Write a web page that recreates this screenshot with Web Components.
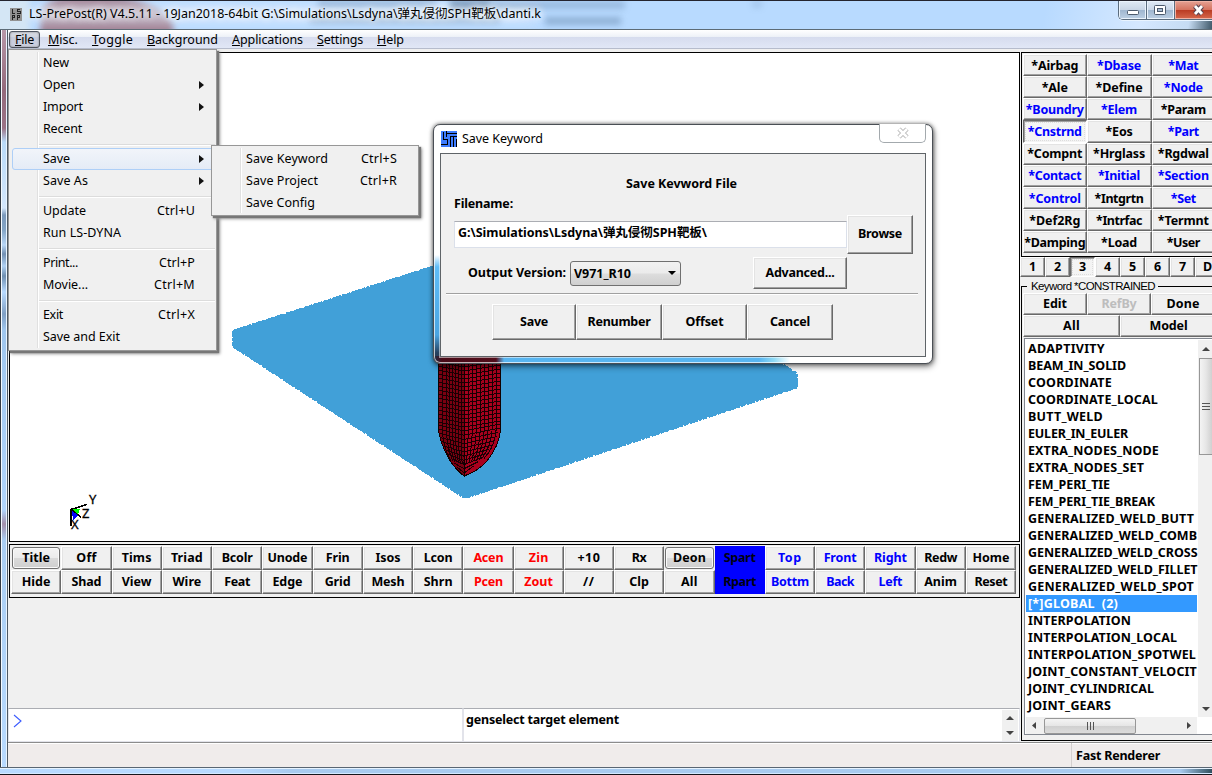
<!DOCTYPE html>
<html lang="en">
<head>
<meta charset="utf-8">
<title>LS-PrePost</title>
<style>
html,body{margin:0;width:1212px;height:775px;overflow:hidden}
body{font:12.5px/16px "Noto Sans","Noto Sans CJK SC",sans-serif;color:#000;background:#b8daff}
</style>
</head>
<body>
<app-window></app-window>
<script>
const define=(name,html,setup)=>customElements.define(name,class extends HTMLElement{
  connectedCallback(){
    if(this.shadowRoot)return;
    const t=document.createElement('template');
    t.innerHTML=html;
    this.attachShadow({mode:'open'}).appendChild(t.content.cloneNode(true));
    if(setup)setup(this,this.shadowRoot);
  }
});
const NS='http://www.w3.org/2000/svg';

/* Label whose tracking is adjusted so that it spans the width given in w */
define('fit-label',`<style>:host{display:inline-block;white-space:pre}span{display:inline-block;white-space:pre}</style><span><slot></slot></span>`,(el,root)=>{
  const w=+el.getAttribute('w');
  if(!w)return;
  const s=root.querySelector('span'),n=el.textContent.length;
  s.style.letterSpacing=((w-s.getBoundingClientRect().width)/n)+'px';
});

define('bevel-button',`<style>
:host{display:flex;align-items:center;justify-content:center;box-sizing:border-box;min-width:0;overflow:hidden;white-space:nowrap;font-weight:bold;background:#f0f0f0;
border:1px solid;border-color:#fff #696969 #696969 #fff;box-shadow:inset -1px -1px #a0a0a0,inset 1px 1px #e3e3e3}
:host([blue]){color:#00f}:host([red]){color:#f00}:host([off]){color:#bdbdbd}
:host([down]){border-color:#696969 #fff #fff #696969;box-shadow:inset 1px 1px #a0a0a0;background:#f4f4f4;outline:1px dotted #ddd;outline-offset:-3px}
:host([round]){border:1px solid #707070;border-radius:3px;margin:1px 1px 1px 1px;background:linear-gradient(#f4f4f4,#ececec 48%,#dadada 52%,#cfcfcf);box-shadow:inset 0 0 0 1px #fafafa}
:host([solid]){border:0;box-shadow:none;background:#00f;color:#001}
</style><slot></slot>`);

const buttons=(root,rows)=>{
  const g=root.querySelector('.grid');
  rows.forEach(([text,flags,w])=>{
    const b=document.createElement('bevel-button');
    (flags||'').split(' ').filter(Boolean).forEach(f=>b.setAttribute(f,''));
    const l=document.createElement('fit-label');
    if(w)l.setAttribute('w',w);
    l.textContent=text;b.appendChild(l);g.appendChild(b);
  });
};

define('title-bar',`<style>
:host{display:flex;height:27px;padding:1px 0 0 10px;position:relative;overflow:hidden;
background:linear-gradient(100deg,transparent 86%,#d5e8ff 94%,#c6dcf3 98%,#40596a 100%),#b8daff;border-top:1px solid #24242e;border-bottom:1px solid #5c6b76}
.back{position:absolute;inset:0;overflow:hidden}
.back i{position:absolute;filter:blur(3px);background:#5e7fa3}
.icon{width:12px;height:13px;margin:6px 7px 0 0;position:relative}
.t{padding-top:4px;height:17px;position:relative;text-shadow:0 0 8px #fff,0 0 8px #fff,0 0 6px #fff9}
.ctl{position:absolute;right:0;top:0;display:flex;height:18px;width:93px;border:1px solid #5b6c7e;border-top:0;border-right:0;border-radius:0 0 0 5px;overflow:hidden;box-shadow:0 1px #e9f4ff}
.ctl b{width:27px;border-right:1px solid #5b6c7e;background:linear-gradient(#e0eaf5,#c9d6e6 48%,#9fb6cf 50%,#bdd0e4);box-shadow:inset 0 0 0 1px #eaf3fc}
.ctl b:last-child{width:46px;background:linear-gradient(#e5a294,#d5735f 48%,#b93a22 50%,#d6694d);box-shadow:inset 0 0 0 1px #efb3a5;border:0}
svg{display:block}
</style>
<div class="back">
<i style="left:-10px;top:-4px;width:40px;height:40px;background:#d4e6f5"></i>
<i style="left:42px;top:-6px;width:132px;height:52px;border-radius:60% 60% 0 0;background:#a07f92;transform:rotate(8deg)"></i>
<i style="left:36px;top:4px;width:500px;height:18px;background:#e3effa99;filter:blur(6px)"></i>
<i style="left:318px;top:-1px;width:118px;height:7px;opacity:.4"></i>
<i style="left:450px;top:-1px;width:40px;height:10px;opacity:.7"></i>
<i style="left:490px;top:0;width:135px;height:8px;opacity:.35"></i>
<i style="left:752px;top:-1px;width:10px;height:8px;opacity:.2"></i>
<i style="left:310px;top:15px;width:190px;height:8px;opacity:.3"></i>
<i style="left:545px;top:16px;width:76px;height:8px;opacity:.45"></i>
</div>
<svg class="icon" viewBox="0 0 12 13" shape-rendering="crispEdges"><rect width="12" height="13" fill="#929292"/><path d="M2 1v4h3M10 1.500h-3v1.500h3v2h-3.500M2.500 12V7.500h2v2h-2M7.500 12V7.500h2v2h-2" fill="none" stroke="#222"/></svg>
<div class="t"><fit-label w="512">LS-PrePost(R) V4.5.11 - 19Jan2018-64bit G:\\Simulations\\Lsdyna\\弹丸侵彻SPH靶板\\danti.k</fit-label></div>
<div class="ctl"><b><svg width="27" height="18"><rect x="8.500" y="9.500" width="11" height="4" rx="1" fill="#fff" stroke="#4c5a6c"/></svg></b>
<b><svg width="27" height="18"><rect x="7.500" y="4.500" width="11" height="9" rx="1" fill="#fff" stroke="#4c5a6c"/><rect x="10.500" y="7.500" width="5" height="3" fill="#a9bdd3" stroke="#4c5a6c"/></svg></b>
<b><svg width="46" height="18"><path d="M20 5l7 8M27 5l-7 8" stroke="#5a4450" stroke-width="5"/><path d="M20 5l7 8M27 5l-7 8" stroke="#fff" stroke-width="2.800"/></svg></b></div>`);

define('menu-bar',`<style>
:host{display:flex;height:18px;padding-left:7px;gap:14px;background:linear-gradient(#fff,#eef2f8 36%,#d6dcee 40%,#e1e7f6);border-bottom:1px solid #b6bccc}
fit-label{height:18px;line-height:20px}
.f{position:relative}
.f::before{content:"";position:absolute;left:-6px;top:1px;width:29px;height:15px;border:1px solid #4e545f;border-radius:3px;background:#b8bccb88;box-shadow:inset 0 0 2px #777}
.f fit-label{position:relative}
</style>
<div class="f"><fit-label w="19"><u>F</u>ile</fit-label></div><fit-label w="30"><u>M</u>isc.</fit-label><fit-label w="41"><u>T</u>oggle</fit-label><fit-label w="71"><u>B</u>ackground</fit-label><fit-label w="71"><u>A</u>pplications</fit-label><fit-label w="46"><u>S</u>ettings</fit-label><fit-label w="27"><u>H</u>elp</fit-label>`);

define('menu-item',`<style>
:host{display:flex;align-items:center;height:22px;padding:0 20px 0 34px;box-sizing:border-box;justify-content:space-between;position:relative}
:host([sub]){padding-right:11px}
:host([hot]){background:linear-gradient(#f2f5fa,#e4ebf6);outline:1px solid #aecff7;outline-offset:-1px;border-radius:3px;margin-left:3px;padding-left:31px}
:host([sub])::after{content:"";border:4px solid transparent;border-left:5px solid #111;border-right:0}
:host([sub]) .k{display:none}
</style><slot></slot><span class="k"><slot name="key"></slot></span>`);
define('menu-separator',`<style>:host{display:block;height:8px;padding:4px 0 0 30px;box-sizing:border-box}div{height:1px;background:#dcdcdc;border-bottom:1px solid #fff}</style><div></div>`);
define('popup-menu',`<style>
:host{display:block;box-sizing:border-box;border:1px solid #979797;background:linear-gradient(90deg,transparent 28px,#e0e0e0 28px,#e0e0e0 29px,#fff 29px,#fff 30px,transparent 30px) 0 2px/100% calc(100% - 4px) no-repeat,#f0f0f0;padding:1px 1px 2px 0;box-shadow:2px 2px 1px #777,3px 3px 3px #999}
</style><slot></slot>`);

define('model-view',`<style>
:host{display:block;height:488px;border:1px solid #000;background:#fff;overflow:hidden}
svg{display:block}
text{font:13px "Noto Sans",sans-serif;stroke:#000;stroke-width:.3px}
</style><svg width="1009" height="488" viewBox="10 53 1009 488" shape-rendering="crispEdges">
<path d="M232 330L565 223 798 373V388L470 497.500H462L232 347z" fill="#41a0d8"/>
<path d="M232 330L565 223M798 388L470 497.500M462 497.500L232 347V330M798 373v15M780 362l17 11" stroke="#fff" stroke-width="1.500" stroke-dasharray="1 3 1 9 2 4" fill="none"/>
<g id="bullet"></g>
<path d="M71 509.500l16-5M71 509v17M71 509l10 8" stroke="#000" stroke-width="1.600" fill="none"/>
<path d="M72 509l8 0-2 6z" fill="#0f0"/><path d="M72 511l6 4-5 5z" fill="#00f"/>
<text x="89" y="504">Y</text><text x="82" y="518">Z</text><text x="71" y="529">X</text>
</svg>`,(el,root)=>{
  const g=root.getElementById('bullet');
  const add=(d,a)=>{const p=document.createElementNS(NS,'path');p.setAttribute('d',d);for(const k in a)p.setAttribute(k,a[k]);g.appendChild(p);};
  const left='M438 340H464V476Q456 470 449 459Q439 442 438 424z',right='M464 340H500.500V430Q499 446 487 461Q477 472 464 476z';
  add(left,{fill:'#7a0011'});add(right,{fill:'#a8001d'});
  let d='';
  /* meridians, bending towards the tip */
  [4,8,11,14,17,20,23,26,30,34,38,42,46,50,54,58].forEach(x=>{
    const X=438+x,k=(X-464)/36;
    d+=`M${X+.5} 340V${425}Q${X} 446 ${464+(X-464)*.62} ${464-Math.abs(k)*6}`;
  });
  /* rings */
  for(let y=344;y<428;y+=4)d+=`M438 ${y-2}L464 ${y+3}L500 ${y-3}`;
  for(let i=0;i<11;i++){
    const y=428+i*4.2,h=1-Math.pow(i/12,1.700);
    d+=`M${464-26*h} ${y-3}L464 ${y+3}L${464+36*h} ${y-4}`;
  }
  add(d,{fill:'none',stroke:'#180003','stroke-width':1});
  add(left+right,{fill:'none',stroke:'#100','stroke-width':1});
});

define('view-toolbar',`<style>
:host{display:block;height:48px;border:1px solid #000;padding:1px 3px 3px 1px;background:#f0f0f0}
.grid{display:grid;grid-template:24px 24px/repeat(20,1fr)}
</style><div class="grid"></div>`,(el,root)=>buttons(root,[
['Title','round',28],['Off','',20],['Tims','',30],['Triad','',32],['Bcolr','',31],['Unode','',40],['Frin','',24],['Isos','',25],['Lcon','',29],['Acen','red',30],['Zin','red',20],['+10','',23],['Rx','',15],['Deon','round',33],['Spart','solid',32],['Top','blue',24],['Front','blue',33],['Right','blue',33],['Redw','',33],['Home','',37],
['Hide','',29],['Shad','',30],['View','',30],['Wire','',29],['Feat','',26],['Edge','',30],['Grid','',26],['Mesh','',33],['Shrn','',29],['Pcen','red',29],['Zout','red',29],['//','',12],['Clp','',20],['All','',17],['Rpart','solid',33],['Bottm','blue',38],['Back','blue',28],['Left','blue',24],['Anim','',33],['Reset','',33]]));

define('keyword-grid',`<style>
:host{display:block;height:202px;border:1px solid #000;border-right:0;padding:1px 0 0 1px;width:200px}
.grid{display:grid;width:193px;grid-template:repeat(9,22.15px)/repeat(3,64.300px)}
fit-label{position:relative;top:.6px;left:-.4px}
</style><div class="grid"></div>`,(el,root)=>buttons(root,[
['*Airbag','',47],['*Dbase','blue',44],['*Mat','blue',30],['*Ale','',26],['*Define','',47],['*Node','blue',39],['*Boundry','blue',58],['*Elem','blue',36],['*Param','',45],['*Cnstrnd','blue down',54],['*Eos','',27],['*Part','blue',31],['*Compnt','',55],['*Hrglass','',52],['*Rgdwal','',51],['*Contact','blue',53],['*Initial','blue',42],['*Section','blue',51],['*Control','blue',52],['*Intgrtn','',49],['*Set','blue',25],['*Def2Rg','',51],['*Intrfac','',46],['*Termnt','',51],['*Damping','',61],['*Load','',36],['*User','',33]]));

define('page-tabs',`<style>:host{display:block;height:20px;width:200px;overflow:hidden;margin-left:-1px}.grid{display:grid;grid-template:20px/repeat(8,25px)}</style><div class="grid"></div>`,
(el,root)=>buttons(root,[['1'],['2'],['3','down'],['4'],['5'],['6'],['7'],['D']]));

define('keyword-list',`<style>
:host{display:flex;height:397px;border:1px solid #828790;border-right:0;background:#fff;margin:1px 0 0 1px;padding:1px 0 0 1px;box-sizing:border-box}
.l{width:172px;display:flex;flex-direction:column}
ol{list-style:none;margin:0;padding:0;height:377px;overflow:hidden;font-weight:bold}
li{height:17px;line-height:17px;padding-left:2px;white-space:pre}
li.sel{background:#3399ff;color:#fff;width:169px}
.h{display:flex;align-items:center;height:17px;background:#f0f0f0;width:171px}
.th{width:90px;height:14px;border:1px solid #979797;border-radius:2px;background:linear-gradient(#f4f4f4,#e6e6e6 48%,#d0d0d0 52%,#dcdcdc);display:flex;justify-content:center;align-items:center}
.v{width:14px;background:#f0f0f0;height:377px;display:flex;flex-direction:column;align-items:flex-end;justify-content:space-between}
.tv{width:12px;height:95px;margin-bottom:auto;border:1px solid #979797;border-right:0;background:linear-gradient(90deg,#f4f4f4,#e6e6e6 50%,#d0d0d0);display:flex;align-items:center;justify-content:center}
svg{display:block}
</style><div class="l"><ol></ol>
<div class="h"><svg width="18" height="17"><path d="M10 5v7l-4-3.500z" fill="#444"/></svg><div class="th"><svg width="9" height="8"><path d="M1.500 0v8M4.500 0v8M7.500 0v8" stroke="#555"/></svg></div><svg width="60" height="17"><path d="M51 5v7l4-3.500z" fill="#444"/></svg></div></div>
<div class="v"><svg width="14" height="18"><path d="M4 11h8l-4-4z" fill="#444"/></svg><div class="tv"><svg width="9" height="9"><path d="M0 1.500h8M0 4.500h8M0 7.500h8" stroke="#555"/></svg></div><svg width="14" height="15"><path d="M4 5h8l-4 4z" fill="#444"/></svg></div>`,(el,root)=>{
  const ol=root.querySelector('ol');
  [['ADAPTIVITY',77],['BEAM_IN_SOLID',98],['COORDINATE',84],['COORDINATE_LOCAL',130],['BUTT_WELD',75],['EULER_IN_EULER',100],['EXTRA_NODES_NODE',131],['EXTRA_NODES_SET',116],['FEM_PERI_TIE',82],['FEM_PERI_TIE_BREAK',127],['GENERALIZED_WELD_BUTT',166],['GENERALIZED_WELD_COMB',169],['GENERALIZED_WELD_CROSS',169.5],['GENERALIZED_WELD_FILLET',169.5],['GENERALIZED_WELD_SPOT',166],['[*]GLOBAL  (2)',90],['INTERPOLATION',103],['INTERPOLATION_LOCAL',149],['INTERPOLATION_SPOTWEL',168],['JOINT_CONSTANT_VELOCIT',169],['JOINT_CYLINDRICAL',126],['JOINT_GEARS',83]].forEach(([t,w],i)=>{
    const li=document.createElement('li'),l=document.createElement('fit-label');
    if(i===15)li.className='sel';
    l.setAttribute('w',w);l.textContent=t;li.appendChild(l);ol.appendChild(li);
  });
});

define('keyword-group',`<style>
:host{display:block;position:relative;margin-top:9px;height:453px;box-sizing:border-box;height:455px;border:1px solid #000;border-right:0;padding:6px 0 0 1px;width:200px}
.legend{position:absolute;left:5px;top:-9px;background:#f0f0f0;padding:0 3px 0 4px;font:11.500px/16px "Liberation Sans",sans-serif;height:15px}
.r{display:flex;height:22px}
.a{width:64px}.b{width:97px;flex:none}.r bevel-button{flex:none}
</style><div class="legend"><fit-label w="124">Keyword *CONSTRAINED</fit-label></div>
<div class="r"><bevel-button class="a"><fit-label w="24">Edit</fit-label></bevel-button><bevel-button class="a" off><fit-label w="35">RefBy</fit-label></bevel-button><bevel-button class="a"><fit-label w="33">Done</fit-label></bevel-button></div>
<div class="r"><bevel-button class="b"><fit-label w="17">All</fit-label></bevel-button><bevel-button class="b"><fit-label w="38">Model</fit-label></bevel-button></div>
<keyword-list></keyword-list>`);

define('command-line',`<style>
:host{display:flex;height:34px}
div{box-sizing:border-box;background:#fff;border:1px solid #e2e3ea;border-top:1px solid #abadb3;height:34px}
.a{width:455px;padding:5px 0 0 4px}
.b{flex:1;display:flex;justify-content:space-between;font-weight:bold;padding:3px 0 0 2px}
.s{display:block;background:#f0f0f0;margin:-2px 1px 1px 0}
</style><div class="a"><svg width="10" height="14"><path d="M1 1l7 6-7 6" fill="none" stroke="#3b5bff" stroke-width="1.100"/></svg></div>
<div class="b"><fit-label w="153">genselect target element</fit-label><svg class="s" width="16" height="31"><path d="M4 10h8l-4-4zM4 21h8l-4 4z" fill="#444"/></svg></div>`);

define('status-bar',`<style>
:host{display:flex;height:24px;background:#f0eceb;border-top:1px solid #8c8c8c;box-shadow:inset 0 1px #fff;justify-content:flex-end}
div{width:136px;border-left:1px solid #d4d0cf;padding-left:4px;line-height:25px;font-weight:bold}
</style><div><fit-label w="84">Fast Renderer</fit-label></div>`);

define('save-dialog',`<style>
:host{display:flex;flex-direction:column;box-sizing:border-box;width:500px;height:240px;border:1px solid #4a4f55;border-radius:7px;padding:0 6px 6px;
background:linear-gradient(90deg,#20304a 0,#4a0b18 8px,#520d1b 62px,transparent 70px) 0 100%/100% 7px no-repeat,
linear-gradient(90deg,#58b5f0 325px,#8fdaf5 340px,#fff 356px) 0 100%/100% 7px no-repeat,
linear-gradient(#fff0 130px,#5fbdf8 142px,#4aa5e2 210px,#26405e 228px) 0 0/7px 100% no-repeat,#fff;
box-shadow:inset 0 0 0 1px #ffffffb0,0 0 4px #0009,1px 3px 6px #0006}
header{display:flex;height:28px;align-items:center;position:relative;padding-left:1px;flex:none}
header svg.i{margin-right:5px}
.x{position:absolute;right:0;top:-1px;width:45px;height:18px;border:1px solid #a3a9ad;border-top:0;border-radius:0 0 5px 5px;background:#fff}
main{flex:1;display:flex;flex-direction:column;border:1px solid #5f6468;background:#f0f0f0;font-weight:bold;box-shadow:0 0 0 1px #fff8}
.hd{align-self:center;height:16px;margin:22px 0 0 -3px}
.hd fit-label{display:block}
.fn{margin:4px 0 0 13px;height:16px}
.row{display:flex}
.in{width:388px;height:25px;border:1px solid #dbe0ea;border-top-color:#abadb3;background:#fff;padding-left:3px;line-height:22px;margin:6px 0 0 13px}
.sel{width:105px;height:23px;border:1px solid #707070;border-radius:3px;background:linear-gradient(#f2f2f2,#ebebeb 48%,#ddd 52%,#cfcfcf);margin:0 72px 0 4px;display:flex;align-items:center;justify-content:space-between;padding:0 0 0 4px}
.sel fit-label{position:relative;top:1px;left:-1px}
hr{border:0;height:1px;background:#a0a0a0;margin:4px 7px 0 5px;box-shadow:0 1px #fff}
</style>
<header><svg class="i" width="16" height="16" shape-rendering="crispEdges"><rect width="16" height="16" fill="#3f7dff"/><path d="M2.500 1v7.500h4v4.500H0M5.500 0v5.500M6 2.500h10M9.500 16V5.500h6.500M12.500 6v10M15.500 8v8" fill="none" stroke="#000" stroke-width="1"/></svg><fit-label w="81">Save Keyword</fit-label>
<div class="x"><svg width="45" height="18"><path d="M19 5l8 8M27 5l-8 8" stroke="#b4b4b4" stroke-width="4.500"/><path d="M19 5l8 8M27 5l-8 8" stroke="#fff" stroke-width="2.600"/></svg></div></header>
<main>
<div class="hd"><fit-label w="111">Save Kevword File</fit-label></div>
<div class="fn"><fit-label w="59">Filename:</fit-label></div>
<div class="row" style="height:39px;margin-top:3px"><div class="in"><fit-label w="249">G:\\Simulations\\Lsdyna\\弹丸侵彻SPH靶板\\</fit-label></div><bevel-button style="width:66px;height:39px"><fit-label w="44" style="margin-top:-2px">Browse</fit-label></bevel-button></div>
<div class="row" style="margin:3px 0 0 27px;height:32px;align-items:center"><fit-label w="98">Output Version:</fit-label><div class="sel"><fit-label w="57">V971_R10</fit-label><svg width="16" height="10"><path d="M4 3h8l-4 4z"/></svg></div><bevel-button style="width:94px;height:32px"><fit-label w="69">Advanced...</fit-label></bevel-button></div>
<hr>
<div class="row" style="margin:10px 0 0 51px;height:36px">
<bevel-button style="width:84px"><fit-label w="28">Save</fit-label></bevel-button><bevel-button style="width:86px"><fit-label w="63">Renumber</fit-label></bevel-button><bevel-button style="width:85px"><fit-label w="38">Offset</fit-label></bevel-button><bevel-button style="width:86px"><fit-label w="40">Cancel</fit-label></bevel-button></div>
</main>`);

define('app-window',`<style>
:host{display:block;width:1212px;height:775px;position:relative;overflow:hidden}
.frame{display:flex;height:737px;padding-left:7px;background:linear-gradient(90deg,#333a44 1px,#f4faff 1px,#f4faff 2px,transparent 2px,transparent 6px,#eaf5ff 6px),
linear-gradient(#b797a8,#946a7c 60px,#9b7386 98px,#b9daf8 112px,#d3e6fb 178px,#7b99bb 185px,#84a5c6 200px,#b8d6f6 215px,#7290b3 224px,#b0d1f3 236px,#6f8fb1 246px,#b8daff 262px,#7f9fc4 284px,#9fc6ee 300px,#b0d4fb 480px,#a390ab 494px,#a9cdf2 510px,#b8daff)}
.client{flex:1;display:flex;flex-direction:column;background:#f0f0f0;border-left:1px solid #4d5863;min-width:0}
.main{display:flex;height:693px;padding-top:3px;box-sizing:border-box}
.left{width:1012px;display:flex;flex-direction:column;flex:none}
.left model-view,.left view-toolbar{margin-left:1px}
.left view-toolbar{margin-top:2px}
.left command-line{margin-top:auto}
.right{display:flex;flex-direction:column;margin-left:1px}
.bottom{height:8px;box-sizing:border-box;border-top:1px solid #5a6672;border-bottom:1px solid #16161c;background:radial-gradient(ellipse at 258px 50%,#7b95b3 0,transparent 16px),linear-gradient(90deg,#b8daff 240px,#a9cbef 290px,#a9cbef 1180px,#31505e 1212px);box-shadow:inset 0 1px #e6f3ff,inset 0 -1px #d5e9ff}
.m1{position:absolute;left:8px;top:49px;width:209px;height:302px}
.m2{position:absolute;left:211px;top:145px;width:208px;height:71px}
save-dialog{position:absolute;left:433px;top:124px}
</style>
<title-bar></title-bar>
<div class="frame"><div class="client"><menu-bar></menu-bar>
<div class="main"><div class="left"><model-view></model-view><view-toolbar></view-toolbar><command-line></command-line></div>
<div class="right"><keyword-grid></keyword-grid><page-tabs></page-tabs><keyword-group></keyword-group></div></div>
<status-bar></status-bar></div></div>
<div class="bottom"></div>
<save-dialog></save-dialog>
<popup-menu class="m1" style="padding-top:2px">
<menu-item><fit-label w="26">New</fit-label></menu-item>
<menu-item sub><fit-label w="32">Open</fit-label></menu-item>
<menu-item sub><fit-label w="40">Import</fit-label></menu-item>
<menu-item><fit-label w="39">Recent</fit-label></menu-item><menu-separator></menu-separator>
<menu-item sub hot><fit-label w="27">Save</fit-label></menu-item>
<menu-item sub><fit-label w="45">Save As</fit-label></menu-item><menu-separator></menu-separator>
<menu-item><fit-label w="43">Update</fit-label><fit-label slot="key" w="38">Ctrl+U</fit-label></menu-item>
<menu-item><fit-label w="78">Run LS-DYNA</fit-label></menu-item><menu-separator></menu-separator>
<menu-item><fit-label w="35">Print...</fit-label><fit-label slot="key" w="36">Ctrl+P</fit-label></menu-item>
<menu-item><fit-label w="45">Movie...</fit-label><fit-label slot="key" w="41">Ctrl+M</fit-label></menu-item><menu-separator></menu-separator>
<menu-item><fit-label w="20">Exit</fit-label><fit-label slot="key" w="37">Ctrl+X</fit-label></menu-item>
<menu-item><fit-label w="77">Save and Exit</fit-label></menu-item>
</popup-menu>
<popup-menu class="m2" style="padding-top:2px">
<menu-item><fit-label w="82">Save Keyword</fit-label><fit-label slot="key" w="36">Ctrl+S</fit-label></menu-item>
<menu-item><fit-label w="72">Save Project</fit-label><fit-label slot="key" w="37">Ctrl+R</fit-label></menu-item>
<menu-item><fit-label w="69">Save Config</fit-label></menu-item>
</popup-menu>`);
</script>
</body>
</html>
